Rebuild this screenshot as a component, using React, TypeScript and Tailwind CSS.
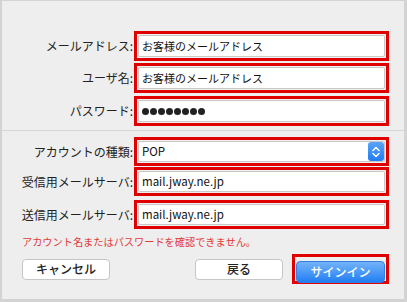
const FONT = '"Noto Sans CJK JP", "Noto Sans", sans-serif';

function Field({ label, children, className = '' }: { label: string; children: React.ReactNode; className?: string }) {
  return (
    <div className={`flex items-center ${className}`}>
      <div className="w-[132px] shrink-0 pr-[1px] text-right text-[12px] text-[#222]">{label}:</div>
      <div className="h-full w-[255px] border-[3px] border-[#e00000] p-[1px]">
        <div className="flex h-full items-center rounded-[2px] border border-[#c9c9c9] bg-white pl-[3px] text-[12px] text-[#111]">
          {children}
        </div>
      </div>
    </div>
  );
}

function Stepper() {
  return (
    <div className="ml-auto flex h-[19px] w-[16px] items-center justify-center rounded-[3px] bg-gradient-to-b from-[#5aa4f8] to-[#1f7cf0]">
      <svg width="10" height="14" viewBox="0 0 10 14" fill="none" stroke="white" strokeWidth="1.5" strokeLinecap="round" strokeLinejoin="round">
        <path d="M2 5.5 L5 2.5 L8 5.5" />
        <path d="M2 8.5 L5 11.5 L8 8.5" />
      </svg>
    </div>
  );
}

export default function App() {
  return (
    <div
      className="h-[302px] w-[407px] overflow-hidden border-b-[3px] border-l-2 border-r-[3px] border-t border-[#d3d3d3] bg-[#eeeeee]"
      style={{ fontFamily: FONT }}
    >
      <div className="flex flex-col pt-[30px]">
        <Field label="メールアドレス" className="h-[30px]">
          <span className="text-[11px]">お客様のメールアドレス</span>
        </Field>
        <Field label="ユーザ名" className="mt-[2px] h-[30px]">
          <span className="text-[11px]">お客様のメールアドレス</span>
        </Field>
        <Field label="パスワード" className="mt-[3px] h-[30px]">
          <span className="flex gap-[1px] text-[#222]">
            {Array.from({ length: 8 }).map((_, i) => (
              <span key={i} className="inline-block h-[7px] w-[7px] rounded-full bg-[#222]" />
            ))}
          </span>
        </Field>
        <div className="mt-[4px] h-px bg-[#d6d6d6]" />
        <Field label="アカウントの種類" className="mt-[6px] h-[29px]">
          <span className="text-[11.5px]">POP</span>
          <Stepper />
        </Field>
        <Field label="受信用メールサーバ" className="mt-[1px] h-[29px]">
          <span className="text-[11.5px]">mail.jway.ne.jp</span>
        </Field>
        <Field label="送信用メールサーバ" className="mt-[4px] h-[29px]">
          <span className="text-[11.5px]">mail.jway.ne.jp</span>
        </Field>
        <div className="mt-[6px] pl-[20px] text-[10.2px] leading-[14px] text-[#e23a3a]">
          アカウント名またはパスワードを確認できません。
        </div>
        <div className="mt-[5px] flex h-[30px] items-center">
          <button className="ml-[20px] h-[21px] w-[88px] rounded-[4px] border border-[#c6c6c6] bg-white text-[12px] font-medium text-[#222]">
            キャンセル
          </button>
          <button className="ml-[85px] h-[21px] w-[88px] rounded-[4px] border border-[#c6c6c6] bg-white text-[12px] font-medium text-[#222]">
            戻る
          </button>
          <div className="ml-[9px] h-[30px] w-[97px] border-[3px] border-[#e00000] p-[1px]">
            <button className="h-full w-full rounded-[4px] border border-[#2f7fe6] bg-gradient-to-b from-[#72b3fa] to-[#1e7ef2] text-[12px] font-medium text-white">
              サインイン
            </button>
          </div>
        </div>
      </div>
    </div>
  );
}
